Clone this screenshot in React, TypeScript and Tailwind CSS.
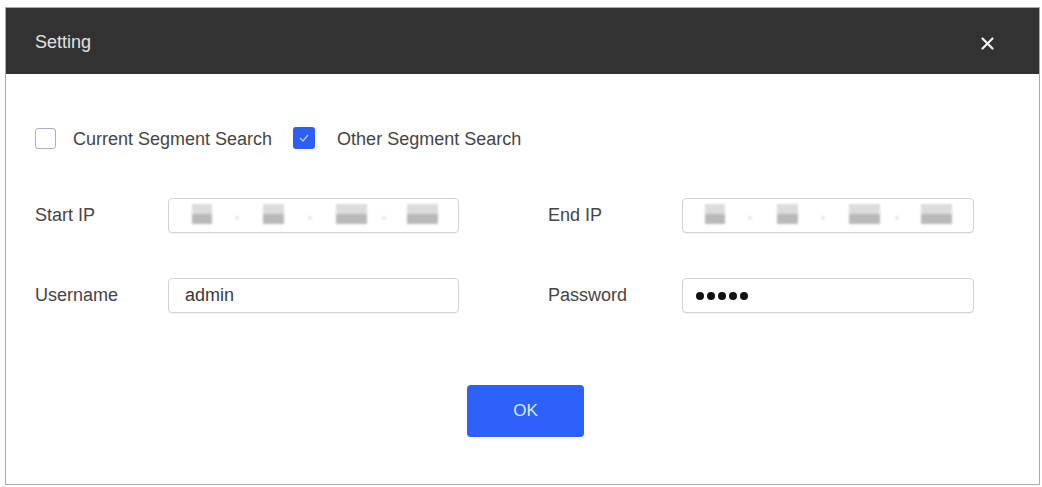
import React from "react";

// blurred placeholder blocks for the masked ip octets, with faint separators between them
function MaskedIp({ offsets, dots }: { offsets: number[]; dots: number[] }) {
  const widths = [20, 21, 31, 31];
  return (
    <div className="relative h-full">
      {offsets.map((left, i) => (
        <div
          key={i}
          className="absolute top-[5px] h-[20px] blur-[1px]"
          style={{ left, width: widths[i] }}
        >
          <div className="h-1/2 bg-[#dcdcdc]" />
          <div className="h-1/2 bg-[#b9b9b9]" />
        </div>
      ))}
      {dots.map((left, i) => (
        <div
          key={i}
          className="absolute top-[17px] w-[4px] h-[4px] rounded-full bg-[#e4e4e4] blur-[1px]"
          style={{ left }}
        />
      ))}
    </div>
  );
}

function Field({ children }: { children?: React.ReactNode }) {
  return (
    <div className="h-[35px] rounded-[4px] border border-[#d3d3d3] bg-white shadow-[0_1px_1px_rgba(0,0,0,0.04)]">
      {children}
    </div>
  );
}

const row = "grid grid-cols-[133px_291px_89px_134px_292px] items-center text-[18px] text-[#454545]";

export default function App() {
  return (
    <div className="w-[1042px] h-[487px] bg-white pt-[7px] pl-[5px] pr-[2px] font-['Liberation_Sans',Arial,sans-serif]">
      <div className="h-[478px] border-[1.5px] border-[#ababab] flex flex-col">
        <div className="h-[66px] bg-[#323232] flex items-center justify-between pl-[29px] pr-[45px]">
          <span className="text-[18px] text-[#e2e2e2] mt-[3px]">Setting</span>
          <svg width="13" height="13" viewBox="0 0 13 13" className="mt-[5px]">
            <path d="M1.5 1.5l10 10M11.5 1.5l-10 10" stroke="#f2f2f2" strokeWidth="2.2" strokeLinecap="round" />
          </svg>
        </div>

        <div className="flex-1 flex flex-col pl-[29px] pt-[53px]">
          <div className="flex items-center h-[22px] text-[18px] text-[#454545]">
            <span className="w-[21px] h-[21px] rounded-[3px] border-[1.5px] border-[#a8aed0] bg-white" />
            <span className="ml-[17px] mt-[2px]">Current Segment Search</span>
            <span className="ml-[21px] w-[22px] h-[22px] rounded-[3px] bg-[#2e5ff4] flex items-center justify-center">
              <svg width="10" height="8" viewBox="0 0 10 8">
                <path d="M1 4l3 3 5-6" stroke="#b9c9ff" strokeWidth="1.3" fill="none" />
              </svg>
            </span>
            <span className="ml-[22px] mt-[2px]">Other Segment Search</span>
          </div>

          <div className={`${row} mt-[49px]`}>
            <span>Start IP</span>
            <Field>
              <MaskedIp offsets={[23, 94, 167, 238]} dots={[66, 139, 213]} />
            </Field>
            <span />
            <span>End IP</span>
            <Field>
              <MaskedIp offsets={[22, 94, 166, 238]} dots={[65, 138, 212]} />
            </Field>
          </div>

          <div className={`${row} mt-[45px]`}>
            <span>Username</span>
            <Field>
              <div className="h-full flex items-center pl-[16px] text-[#3a3a3a]">admin</div>
            </Field>
            <span />
            <span>Password</span>
            <Field>
              <div className="h-full flex items-center gap-[3px] pl-[13px]">
                {[0, 1, 2, 3, 4].map((i) => (
                  <span key={i} className="w-[8px] h-[8px] rounded-full bg-[#111]" />
                ))}
              </div>
            </Field>
          </div>

          <div className="mt-[72px] pl-[432px]">
            <button className="w-[117px] h-[52px] rounded-[4px] bg-[#2c61fb] text-[17px] text-[#dfe7ff]">
              OK
            </button>
          </div>
        </div>
      </div>
    </div>
  );
}
